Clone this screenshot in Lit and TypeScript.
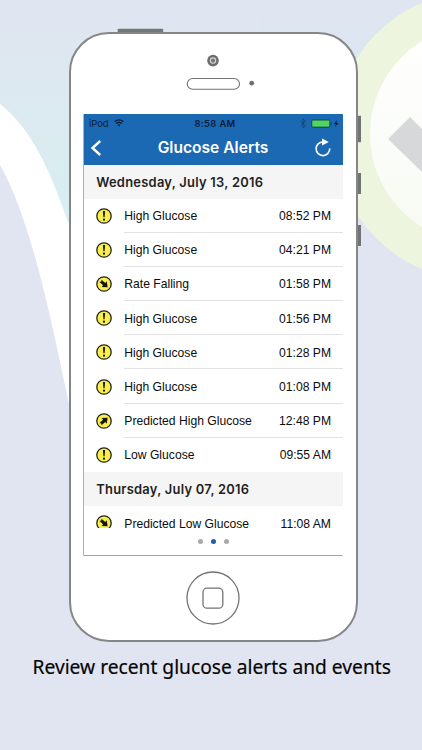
import { LitElement, html, svg, css } from "lit";
import { customElement, property } from "lit/decorators.js";

type AlertKind = "warning" | "down" | "up";

interface GlucoseAlert {
  kind: AlertKind;
  label: string;
  time: string;
  partial?: boolean;
}

interface AlertDay {
  date: string;
  alerts: GlucoseAlert[];
}

const high = (time: string): GlucoseAlert => ({ kind: "warning", label: "High Glucose", time });

const DAYS: AlertDay[] = [
  {
    date: "Wednesday, July 13, 2016",
    alerts: [
      high("08:52 PM"),
      high("04:21 PM"),
      { kind: "down", label: "Rate Falling", time: "01:58 PM" },
      high("01:56 PM"),
      high("01:28 PM"),
      high("01:08 PM"),
      { kind: "up", label: "Predicted High Glucose", time: "12:48 PM" },
      { kind: "warning", label: "Low Glucose", time: "09:55 AM" },
    ],
  },
  {
    date: "Thursday, July 07, 2016",
    alerts: [{ kind: "down", label: "Predicted Low Glucose", time: "11:08 AM", partial: true }],
  },
];

@customElement("alert-icon")
export class AlertIcon extends LitElement {
  @property() kind: AlertKind = "warning";

  static styles = css`
    :host { display: block; width: 16px; height: 16px; flex: none; }
    svg { display: block; }
  `;

  render() {
    const arrow = "M-4.7 -1.6 H0.2 V-3.8 L4.9 0 L0.2 3.8 V1.6 H-4.7 L-3.7 0 Z";
    const mark =
      this.kind === "warning"
        ? svg`<path d="M6.9 3 H9.1 L8.6 9.3 H7.4 Z" fill="#16160c"/><circle cx="8" cy="11.7" r="1.1" fill="#16160c"/>`
        : svg`<path d=${arrow} fill="#16160c" transform="translate(8 8) rotate(${this.kind === "down" ? 42 : -42})"/>`;
    return html`<svg width="16" height="16" viewBox="0 0 16 16">
      <circle cx="8" cy="8" r="7.2" fill="#f8ef4e" stroke="#25241a" stroke-width="1.3" />
      ${mark}
    </svg>`;
  }
}

@customElement("alert-row")
export class AlertRow extends LitElement {
  @property({ attribute: false }) alert!: GlucoseAlert;

  static styles = css`
    :host {
      display: flex;
      align-items: stretch;
      height: 34.2px;
      padding-left: 11.7px;
      box-sizing: border-box;
      flex: none;
    }
    .icon { width: 28px; display: flex; align-items: center; }
    .icon.partial { height: 21.5px; align-items: flex-start; padding-top: 9px; box-sizing: border-box; overflow: hidden; }
    .body {
      flex: 1;
      display: flex;
      justify-content: space-between;
      align-items: center;
      padding: 2px 12px 0 0.6px;
      border-bottom: 1px solid #e2e2e4;
      font-size: 12.15px;
      color: #0c0c0c;
      white-space: nowrap;
    }
    :host([last]) .body { border-bottom-color: transparent; }
  `;

  render() {
    return html`
      <div class=${this.alert.partial ? "icon partial" : "icon"}>
        <alert-icon .kind=${this.alert.kind}></alert-icon>
      </div>
      <div class="body"><span>${this.alert.label}</span><span>${this.alert.time}</span></div>
    `;
  }
}

@customElement("alerts-screen")
export class AlertsScreen extends LitElement {
  static styles = css`
    :host {
      display: flex;
      flex-direction: column;
      width: 260px;
      height: 442px;
      box-sizing: border-box;
      border-left: 1px solid #b0b0b8;
      border-bottom: 1px solid #a6a6a8;
      border-radius: 1px;
      background: #fff;
      overflow: hidden;
      font-family: "Liberation Sans", Arial, sans-serif;
    }
    .header { background: #1b68b3; height: 50.5px; flex: none; }
    .status {
      display: grid;
      grid-template-columns: 1fr auto 1fr;
      align-items: center;
      height: 18px;
      padding: 0 4px 0 5px;
      font-family: Inter, sans-serif;
      font-size: 9.4px;
      color: #0b2038;
    }
    .left, .right { display: flex; align-items: center; }
    .left { gap: 5px; }
    .right { justify-content: flex-end; }
    .clock { font-weight: 600; letter-spacing: 0.35px; padding-left: 2px; }
    .nav {
      display: grid;
      grid-template-columns: 18px 1fr 18px;
      align-items: center;
      height: 31px;
      padding: 0 11px 0 6px;
      color: #fff;
    }
    .title { font: 600 15.6px Inter, sans-serif; text-align: center; padding-left: 4px; }
    .list { height: 363px; flex: none; }
    .date {
      display: flex;
      align-items: center;
      height: 34px;
      padding: 1px 0 0 12.2px;
      box-sizing: border-box;
      background: #f5f5f5;
      color: #1f1f21;
      font: 600 12.9px Inter, sans-serif;
      letter-spacing: 0.27px;
    }
    .pages { display: flex; justify-content: center; gap: 7.4px; padding-top: 11px; }
    .dot { width: 5.6px; height: 5.6px; border-radius: 50%; background: #a9a9a9; }
    .dot.on { background: #1b62ab; }
    svg { display: block; }
  `;

  render() {
    return html`
      <div class="header">
        <div class="status">
          <div class="left">
            <span>iPod</span>
            <svg width="10" height="8" viewBox="0 0 10 8" fill="none" stroke="#0b2038" stroke-width="1.3">
              <path d="M0.5 2.8 Q5 -0.9 9.5 2.8" />
              <path d="M2.1 4.6 Q5 2.3 7.9 4.6" />
              <path d="M3.5 5.8 Q5 4.7 6.5 5.8 L5 7.5 Z" fill="#0b2038" stroke="none" />
            </svg>
          </div>
          <span class="clock">8:58 AM</span>
          <div class="right">
            <svg width="40" height="11" viewBox="0 0 40 11">
              <path d="M1.6 3.2 L6.4 7.8 L4.1 10 V1 L6.4 3.2 L1.6 7.8" fill="none" stroke="#163f6c" stroke-width="0.8" />
              <rect x="12.8" y="2.1" width="18" height="7" rx="1" fill="#4cd764" stroke="#10283f" stroke-width="0.7" />
              <path d="M31.9 4.1 Q33.4 5.6 31.9 7.1 Z" fill="#10283f" />
              <path d="M38 2.2 L34.8 6 H36.8 L36 9 L39.4 5 H37.3 Z" fill="#0b1c2e" />
            </svg>
          </div>
        </div>
        <div class="nav">
          <svg width="12" height="18" viewBox="0 0 12 18"><path d="M10.2 2 L2.5 9 L10.2 16" fill="none" stroke="#fff" stroke-width="2.4" /></svg>
          <span class="title">Glucose Alerts</span>
          <svg width="18" height="20" viewBox="0 0 18 20">
            <path d="M9.1 4 A6.8 6.8 0 1 0 15.7 10.4" fill="none" stroke="#fff" stroke-width="1.6" />
            <path d="M8 0.6 L14.8 4 L8 7.4 Z" fill="#fff" />
          </svg>
        </div>
      </div>
      <div class="list">
        ${DAYS.map(
          (day) => html`
            <div class="date">${day.date}</div>
            ${day.alerts.map(
              (a, i) => html`<alert-row .alert=${a} ?last=${i === day.alerts.length - 1}></alert-row>`
            )}
          `
        )}
      </div>
      <div class="pages"><i class="dot"></i><i class="dot on"></i><i class="dot"></i></div>
    `;
  }
}

@customElement("app-root")
export class AppRoot extends LitElement {
  static styles = css`
    :host {
      display: block;
      position: relative;
      width: 422px;
      height: 750px;
      overflow: hidden;
      background: #e1e5f1;
    }
    .backdrop { position: absolute; inset: 0; display: block; }
    .page { position: relative; display: flex; flex-direction: column; align-items: center; padding: 32px 0 0 4px; }
    .phone {
      display: flex;
      flex-direction: column;
      align-items: center;
      width: 289px;
      height: 610px;
      box-sizing: border-box;
      border: 2px solid #858688;
      border-radius: 40px;
      background: #fff;
    }
    .top { height: 80px; flex: none; }
    .home { margin-top: 14.5px; }
    svg { display: block; }
    .caption {
      margin-top: 10px;
      padding-right: 2px;
      font: 20px/30px "Noto Sans", sans-serif;
      color: #050507;
      -webkit-text-stroke: 0.2px #050507;
      white-space: nowrap;
      transform: scaleX(0.96);
    }
  `;

  render() {
    return html`
      <svg class="backdrop" width="422" height="750" viewBox="0 0 422 750">
        <defs>
          <linearGradient id="sky" x1="0" y1="0" x2="0" y2="1">
            <stop offset="0" stop-color="#e0e5f1" />
            <stop offset="1" stop-color="#d7eff0" />
          </linearGradient>
          <linearGradient id="side" x1="0" y1="0" x2="0" y2="1">
            <stop offset="0" stop-color="#e0e5f1" />
            <stop offset="0.4" stop-color="#d8e6f0" />
            <stop offset="1" stop-color="#e1e5f1" />
          </linearGradient>
          <linearGradient id="disc" x1="0" y1="0" x2="0" y2="1">
            <stop offset="0" stop-color="#ffffff" />
            <stop offset="1" stop-color="#f7faf2" />
          </linearGradient>
        </defs>
        <rect width="260" height="230" fill="url(#sky)" />
        <rect x="260" width="162" height="230" fill="url(#side)" />
        <path d="M0 104 C32 129 50 170 70 228 V410 H0 Z" fill="#fff" />
        <path d="M0 165 C34 225 55 340 70 408 V420 H0 Z" fill="#e1e5f1" />
        <circle cx="479" cy="136" r="145" fill="#edf5df" />
        <circle cx="479" cy="134" r="109" fill="url(#disc)" />
        <path d="M388 139 L410 117 L422 129 V172 Z" fill="#d7d8d9" />
        <rect x="117.7" y="28.8" width="45.5" height="5" rx="0.8" fill="#737776" />
        <g fill="#727375">
          <rect x="356" y="115.8" width="5" height="26.4" />
          <rect x="356" y="173" width="5" height="21" />
          <rect x="356" y="225" width="5" height="21" />
        </g>
      </svg>
      <div class="page">
        <div class="phone">
          <svg class="top" width="100" height="80" viewBox="163 34 100 80">
            <circle cx="213" cy="60.6" r="5.8" fill="#6c6d6f" />
            <circle cx="213" cy="60.6" r="2.7" fill="#77787a" stroke="#d5d5d5" stroke-width="1.1" />
            <rect x="187.2" y="78.5" width="52.3" height="10.8" rx="5.4" fill="#fff" stroke="#727375" stroke-width="1.1" />
            <circle cx="251.7" cy="83.2" r="2.4" fill="#6f7072" />
          </svg>
          <alerts-screen></alerts-screen>
          <svg class="home" width="54" height="54" viewBox="0 0 54 54" fill="none" stroke="#727375" stroke-width="1.3">
            <circle cx="27" cy="27" r="26" />
            <rect x="17" y="17.2" width="19.8" height="20" rx="4" />
          </svg>
        </div>
        <div class="caption">Review recent glucose alerts and events</div>
      </div>
    `;
  }
}
